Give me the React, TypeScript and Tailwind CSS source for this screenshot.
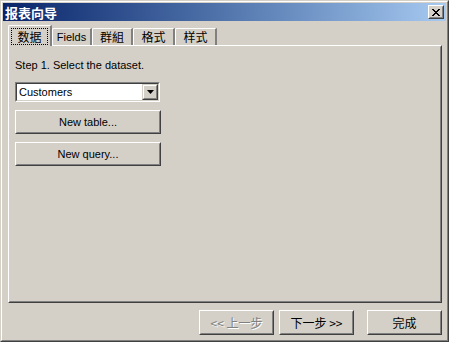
import React from "react";

const UI = "font-['Liberation_Sans','Noto_Sans_CJK_SC',sans-serif]";
const CJK = "font-['Noto_Sans_CJK_SC','Liberation_Sans',sans-serif]";

const tabs = [
  { label: "数据", w: "w-[44px]", active: true, cjk: true },
  { label: "Fields", w: "w-[40px]", active: false, cjk: false },
  { label: "群組", w: "w-[41px]", active: false, cjk: true },
  { label: "格式", w: "w-[42px]", active: false, cjk: true },
  { label: "样式", w: "w-[42px]", active: false, cjk: true },
];

function RaisedButton({
  children,
  className = "",
  disabled = false,
}: {
  children: React.ReactNode;
  className?: string;
  disabled?: boolean;
}) {
  return (
    <div
      className={`border border-t-white border-l-white border-r-[#404040] border-b-[#404040] bg-[#d4d0c8] ${className}`}
    >
      <div
        className={`h-full flex items-center justify-center border border-transparent border-r-[#808080] border-b-[#808080] ${
          disabled ? "text-[#808080] [text-shadow:1px_1px_0_#fff]" : "text-black"
        }`}
      >
        {children}
      </div>
    </div>
  );
}

export default function App() {
  return (
    <div
      className={`w-[449px] h-[342px] bg-[#d4d0c8] border border-t-[#d4d0c8] border-l-[#d4d0c8] border-r-[#404040] border-b-[#404040] ${UI}`}
    >
      <div className="h-full border border-t-white border-l-white border-r-[#808080] border-b-[#808080] flex flex-col">
        {/* title bar */}
        <div className="mx-px mt-px h-[18px] flex items-center justify-between bg-gradient-to-r from-[#0a246a] to-[#a6caf0] pl-[2px] pr-[2px]">
          <span className={`${CJK} text-white font-bold text-[13px] leading-none`}>
            报表向导
          </span>
          <div className="w-[16px] h-[14px] border border-t-white border-l-white border-r-[#404040] border-b-[#404040] bg-[#d4d0c8]">
            <div className="w-full h-full border border-transparent border-r-[#808080] border-b-[#808080] flex items-center justify-center">
              <svg width="8" height="7" viewBox="0 0 8 7">
                <path d="M0 0h2v1h1v1h2v-1h1v-1h2v1h-1v1h-1v1h-1v1h1v1h1v1h1v1h-2v-1h-1v-1h-2v1h-1v1h-2v-1h1v-1h1v-1h1v-1h-1v-1h-1v-1h-1z" fill="#000" />
              </svg>
            </div>
          </div>
        </div>

        <div className="flex-1 pl-[6px] pr-[5px] pt-[4px] flex flex-col">
          {/* tabs */}
          <div className="h-[20px] flex items-end">
            {tabs.map((t) =>
              t.active ? (
                <div
                  key={t.label}
                  className={`${t.w} h-[21px] -mb-px relative z-10 bg-[#d4d0c8] border-l border-t border-t-white border-l-white border-r-2 border-r-[#808080] rounded-tl-[2px] flex items-center justify-center`}
                >
                  <span
                    className={`${CJK} text-[12px] leading-[13px] px-[5px] pt-px pb-px outline-1 outline-dotted outline-black text-black`}
                  >
                    {t.label}
                  </span>
                </div>
              ) : (
                <div
                  key={t.label}
                  className={`${t.w} h-[17px] bg-[#d4d0c8] border-l border-t border-t-white border-l-white border-r-2 border-r-[#808080] rounded-tl-[2px] flex items-center justify-center`}
                >
                  <span className={`${t.cjk ? CJK + " text-[12px]" : UI + " text-[11px]"} leading-none text-black`}>
                    {t.label}
                  </span>
                </div>
              )
            )}
          </div>

          {/* tab panel */}
          <div className="h-[258px] border border-t-white border-l-white border-r-[#404040] border-b-[#404040]">
            <div className="h-full border border-transparent border-r-[#808080] border-b-[#808080] pl-[5px] pt-[12px]">
              <div className="text-[11px] leading-[13px] text-black">Step 1. Select the dataset.</div>

              {/* combo */}
              <div className="mt-[10px] w-[145px] h-[20px] border border-t-[#808080] border-l-[#808080] border-r-white border-b-white">
                <div className="h-full border border-t-[#404040] border-l-[#404040] border-r-[#d4d0c8] border-b-[#d4d0c8] bg-white flex items-center">
                  <span className="flex-1 pl-[2px] text-[11px] leading-none text-black">Customers</span>
                  <div className="w-[16px] h-[16px] border border-t-[#d4d0c8] border-l-[#d4d0c8] border-r-[#404040] border-b-[#404040] bg-[#d4d0c8]">
                    <div className="w-full h-full border border-t-white border-l-white border-r-[#808080] border-b-[#808080] flex items-center justify-center">
                      <svg width="7" height="4" viewBox="0 0 7 4">
                        <path d="M0 0h7L3.5 4z" fill="#000" />
                      </svg>
                    </div>
                  </div>
                </div>
              </div>

              <RaisedButton className="mt-[8px] w-[146px] h-[24px] text-[11px]">New table...</RaisedButton>
              <RaisedButton className="mt-[8px] w-[146px] h-[24px] text-[11px]">New query...</RaisedButton>
            </div>
          </div>

          {/* footer buttons */}
          <div className="mt-[7px] flex justify-end">
            <RaisedButton disabled className={`w-[75px] h-[25px] text-[12px] ${CJK}`}>
              &lt;&lt; 上一步
            </RaisedButton>
            <RaisedButton className={`ml-[5px] w-[75px] h-[25px] text-[12px] ${CJK}`}>
              下一步 &gt;&gt;
            </RaisedButton>
            <RaisedButton className={`ml-[13px] w-[75px] h-[25px] text-[12px] ${CJK}`}>
              完成
            </RaisedButton>
          </div>
        </div>
      </div>
    </div>
  );
}
